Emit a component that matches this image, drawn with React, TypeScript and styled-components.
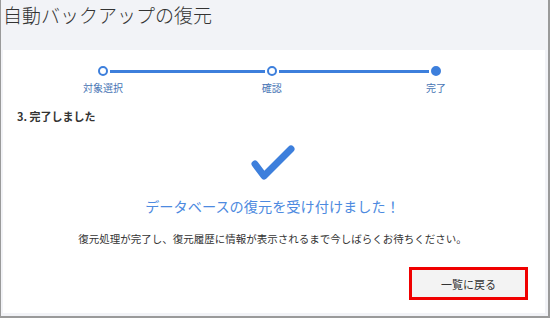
import * as React from 'react';
import styled, { createGlobalStyle } from 'styled-components';

const colors = {
  text: '#333333',
  blue: '#3d7fdc',
  blueText: '#4d8ae0',
  stepLabel: '#4774b4',
  pageBg: '#f2f3f7',
  frame: '#9a9a9a',
  red: '#f00000',
};

const GlobalStyle = createGlobalStyle`
  html, body {
    margin: 0;
    padding: 0;
    background: #ffffff;
  }
  body {
    font-family: "Noto Sans CJK JP", "Noto Sans", sans-serif;
    color: ${colors.text};
  }
`;

const steps = ['対象選択', '確認', '完了'];

const CheckMark = () => (
  <svg width="48" height="40" viewBox="0 0 48 40">
    <path
      d="M6 21 L15 33 L42 6"
      fill="none"
      stroke={colors.blue}
      strokeWidth="7"
      strokeLinecap="round"
      strokeLinejoin="round"
    />
  </svg>
);

const App = () => {
  const current = steps.length - 1;
  return (
    <>
      <GlobalStyle />
      <Frame>
        <Header>自動バックアップの復元</Header>
        <Card>
          <Stepper>
            {steps.map((label, i) => (
              <React.Fragment key={label}>
                {i > 0 && <StepLine grow={i === 1 ? 169 : 164} />}
                <Step>
                  <Dot filled={i === current} />
                  <StepLabel>{label}</StepLabel>
                </Step>
              </React.Fragment>
            ))}
          </Stepper>
          <SectionTitle>3. 完了しました</SectionTitle>
          <Result>
            <CheckMark />
            <Message>データベースの復元を受け付けました！</Message>
            <Note>復元処理が完了し、復元履歴に情報が表示されるまで今しばらくお待ちください。</Note>
          </Result>
          <Footer>
            <BackButton>一覧に戻る</BackButton>
          </Footer>
        </Card>
      </Frame>
    </>
  );
};

const Frame = styled.div`
  width: 550px;
  height: 318px;
  box-sizing: border-box;
  display: flex;
  flex-direction: column;
  background: ${colors.pageBg};
  border-left: 1px solid ${colors.frame};
  border-right: 2px solid ${colors.frame};
  border-bottom: 2px solid ${colors.frame};
  padding: 0 3px 3px 2px;
`;

const Header = styled.div`
  height: 50px;
  flex-shrink: 0;
  font-size: 19px;
  font-weight: 300;
  line-height: 30px;
  color: ${colors.text};
`;

const Card = styled.div`
  flex: 1;
  background: #ffffff;
  display: flex;
  flex-direction: column;
  padding: 16px 17px 13px 14px;
`;

const Stepper = styled.div`
  display: flex;
  align-items: flex-start;
  margin: 0 87px 0 81px;
`;

const Step = styled.div`
  width: 10px;
  display: flex;
  flex-direction: column;
  align-items: center;
`;

const Dot = styled.div<{ filled: boolean }>`
  width: 10px;
  height: 10px;
  box-sizing: border-box;
  border-radius: 50%;
  border: 2px solid ${colors.blue};
  background: ${(p) => (p.filled ? colors.blue : '#ffffff')};
`;

const StepLine = styled.div<{ grow: number }>`
  flex: ${(p) => p.grow} 1 0;
  height: 3px;
  margin: 4px 2px 0;
  background: ${colors.blue};
`;

const StepLabel = styled.div`
  margin-top: 5px;
  font-size: 10px;
  line-height: 14px;
  white-space: nowrap;
  color: ${colors.stepLabel};
`;

const SectionTitle = styled.div`
  margin-top: 13px;
  font-size: 11px;
  line-height: 16px;
  font-weight: bold;
  color: ${colors.text};
`;

const Result = styled.div`
  display: flex;
  flex-direction: column;
  align-items: center;
  margin-top: 19px;
`;

const Message = styled.div`
  margin-top: 13px;
  font-size: 14.2px;
  line-height: 20px;
  color: ${colors.blueText};
`;

const Note = styled.div`
  margin-top: 16px;
  font-size: 10.5px;
  line-height: 14px;
  color: ${colors.text};
`;

const Footer = styled.div`
  margin-top: auto;
  display: flex;
  justify-content: flex-end;
`;

const BackButton = styled.button`
  width: 119px;
  height: 33px;
  box-sizing: border-box;
  border: 3px solid ${colors.red};
  background: #f3f3f3;
  font-family: inherit;
  font-size: 11px;
  color: ${colors.text};
  cursor: pointer;
`;

export default App;
